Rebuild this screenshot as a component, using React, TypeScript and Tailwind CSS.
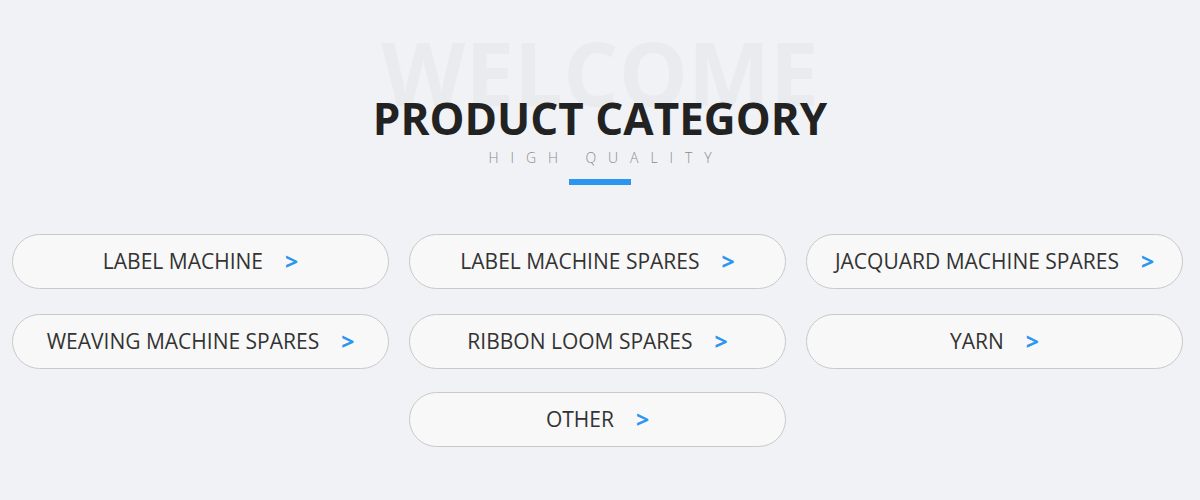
import React from 'react';

const categories = [
  'LABEL MACHINE',
  'LABEL MACHINE SPARES',
  'JACQUARD MACHINE SPARES',
  'WEAVING MACHINE SPARES',
  'RIBBON LOOM SPARES',
  'YARN',
];

function CategoryButton({ label }: { label: string }) {
  return (
    <a
      href="#"
      className="flex h-[55px] w-[377px] items-center justify-center gap-[22px] rounded-full border border-[#c9c9c9] bg-[#f8f8f8] text-[21px] text-[#333]"
    >
      <span>{label}</span>
      <span className="text-[23px] font-bold text-[#2b95f0]">&gt;</span>
    </a>
  );
}

export default function App() {
  return (
    <div className="h-[500px] w-[1200px] bg-[#f1f2f6] font-['Open_Sans',sans-serif]">
      {/* heading */}
      <div className="relative flex flex-col items-center pt-[96px]">
        <div className="absolute left-0 right-0 top-[29px] text-center text-[87px] font-bold leading-none text-[#eaebee]">
          WELCOME
        </div>
        <h2 className="relative text-[44px] font-bold leading-none text-[#222]">PRODUCT CATEGORY</h2>
        <p className="relative mt-[11px] pl-[12px] text-[14px] font-light leading-none tracking-[0.85em] text-[#8a8a8a]">
          HIGH QUALITY
        </p>
        <div className="mt-[14px] h-[6px] w-[62px] bg-[#2b95f0]" />
      </div>

      {/* categories */}
      <div className="mt-[49px] grid grid-cols-[377px_377px_377px] gap-x-[20px] gap-y-[25px] pl-[12px]">
        {categories.map((c) => (
          <CategoryButton key={c} label={c} />
        ))}
        <div className="col-start-2 -mt-[2px]">
          <CategoryButton label="OTHER" />
        </div>
      </div>
    </div>
  );
}
